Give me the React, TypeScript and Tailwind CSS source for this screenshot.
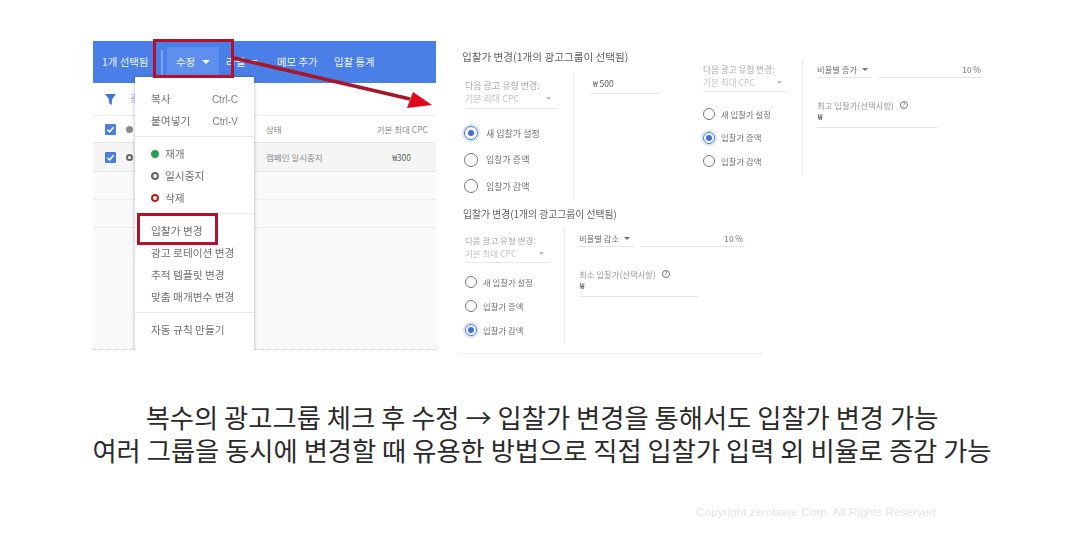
const KR = '"Noto Sans CJK KR","Noto Sans",sans-serif';

function Caret({ w, h, c }: { w: number; h: number; c: string }) {
  return (
    <svg width={w} height={h} viewBox="0 0 8 4" preserveAspectRatio="none" className="shrink-0" fill={c}>
      <path d="M0 0H8L4 4Z" />
    </svg>
  );
}

function Radio({ on, label, big }: { on?: boolean; label: string; big?: boolean }) {
  return (
    <div className={big ? "flex items-center gap-[8px] h-[14px]" : "flex items-center gap-[6px] h-[12px]"}>
      <span className={(big ? "w-[14px] h-[14px]" : "w-[12px] h-[12px]") + " rounded-full border-[1.5px] flex items-center justify-center shrink-0 " + (on ? "border-[#4a78d8] shadow-[0_0_0_2px_#dbe5f8]" : "border-[#777777]")}>
        {on && <span className="w-[6px] h-[6px] rounded-full bg-[#3f6fd6]" />}
      </span>
      <span className={(big ? "text-[9px]" : "text-[8.4px]") + " text-[#707070] leading-none"}>{label}</span>
    </div>
  );
}

function TypeSelect({ w, size, pb }: { w: string; size: string; pb: string }) {
  return (
    <div className={w + " " + pb + " border-b border-[#e6e6e6]"}>
      <div className={size + " leading-[13px] text-[#a8a8a8] whitespace-nowrap"}>다음 광고 유형 변경:</div>
      <div className={size + " flex justify-between items-center pr-[6px] leading-[13px] text-[#c4c4c4]"}>
        <span>기본 최대 CPC</span>
        <Caret w={5} h={3} c="#bdbdbd" />
      </div>
    </div>
  );
}

function PercentPanel({ label, floor, pt }: { label: string; floor: string; pt: string }) {
  return (
    <div className={"flex flex-col pl-[14px] " + pt}>
      <div className="flex gap-[6px]">
        <div className="w-[55px] h-[15px] border-b border-[#e6e6e6] flex items-start gap-[5px] text-[8.3px] leading-[12px] text-[#707070] whitespace-nowrap">
          <span>{label}</span>
          <span className="h-[12px] flex items-center"><Caret w={6} h={3} c="#707070" /></span>
        </div>
        <div className="w-[105px] h-[15px] border-b border-[#e6e6e6] text-right pr-[2px] text-[8.3px] leading-[12px] text-[#707070]">10 %</div>
      </div>
      <div className="w-[120px] mt-[21px] h-[29px] border-b border-[#e6e6e6]">
        <div className="flex items-center gap-[6px] text-[8.4px] leading-[12px] text-[#9a9a9a]">
          <span>{floor}</span>
          <span className="w-[8px] h-[8px] rounded-full border border-[#777777] text-[6px] leading-[6px] text-center text-[#666666]">?</span>
        </div>
        <div className="text-[8px] leading-[12px] text-[#444444] pl-[1px]">₩</div>
      </div>
    </div>
  );
}

function MenuItem({ children, right }: { children: React.ReactNode; right?: string }) {
  return (
    <div className="h-[22px] pl-[16px] pr-[16px] flex items-center justify-between text-[10.7px] text-[#707070] whitespace-nowrap">
      <span>{children}</span>
      {right && <span className="text-[10px] text-[#808080]" style={{ fontFamily: '"Liberation Sans",sans-serif' }}>{right}</span>}
    </div>
  );
}

function Dot({ c, ring }: { c: string; ring?: boolean }) {
  return <span className="w-[8px] h-[8px] rounded-full mr-[6px] inline-block align-[-0.5px] border-[2px]" style={{ borderColor: c, background: ring ? "#eeeeee" : c }} />;
}

function Check() {
  return (
    <span className="w-[11px] h-[11px] rounded-[1px] bg-[#4a7fe0] flex items-center justify-center shrink-0">
      <svg width="9" height="9" viewBox="0 0 10 10" fill="none" stroke="#ffffff" strokeWidth="1.6"><path d="M1.5 5.2 4 7.6 8.5 2.5" /></svg>
    </span>
  );
}

export default function App() {
  return (
    <div className="relative w-[1077px] h-[538px] bg-white overflow-hidden" style={{ fontFamily: KR }}>
      <div className="flex items-start pt-[41px] pl-[93px] blur-[0.6px]">
        {/* Left screenshot */}
        <div className="relative w-[343px] h-[309px] bg-[#fafafa] shrink-0 overflow-hidden">
          <div className="h-[42px] bg-[#4a7fe8] flex items-center text-[10.4px] text-white/90 pl-[9px] whitespace-nowrap">
            <span className="w-[52px]">1개 선택됨</span>
            <span className="w-[2px] h-[25px] bg-[#7ba1ee] ml-[7px]" />
            <div className="ml-[4px] w-[52px] h-[30px] bg-[#5f8fee] flex items-center justify-center gap-[7px]"><span>수정</span><Caret w={8} h={4} c="#ffffff" /></div>
            <div className="ml-[7px] w-[51px] flex items-center gap-[5px]"><span>라벨</span><Caret w={8} h={4} c="#ffffff" /></div>
            <span className="w-[57px]">메모 추가</span>
            <span>입찰 통계</span>
          </div>
          <div className="h-[33px] bg-white border-b border-[#eeeeee] flex items-center pl-[12px]">
            <svg width="11" height="11" viewBox="0 0 12 12" fill="#3f74e0"><path d="M0 0H12L7.5 6V12L4.5 10V6Z" /></svg>
            <span className="ml-[14px] text-[9px] text-[#8fb0ee]">광</span>
          </div>
          <div className="h-[27px] bg-white border-b border-[#e6e6e6] flex items-center pl-[12px] text-[8.5px] text-[#8a8a8a] whitespace-nowrap">
            <Check />
            <span className="ml-[10px] w-[7px] h-[7px] rounded-full bg-[#8a8a8a]" />
            <span className="ml-[133px]">상태</span>
            <span className="ml-auto mr-[8px]">기본 최대 CPC</span>
          </div>
          <div className="h-[29px] bg-[#f5f5f5] border-b border-[#e4e4e4] flex items-center pl-[12px] text-[8.5px] text-[#8a8a8a] whitespace-nowrap">
            <Check />
            <span className="ml-[10px] w-[7px] h-[7px] rounded-full border-[2px] border-[#666666]" />
            <span className="ml-[133px]">캠페인 일시중지</span>
            <span className="ml-auto mr-[25px] text-[#666666]">₩300</span>
          </div>
          <div className="h-[28px] border-b border-[#ececec]" />
          <div className="h-[28px] border-b border-[#ececec]" />
          <div className="absolute left-0 right-0 bottom-0 h-[1px] border-b border-dotted border-[#c4c4c4]" />
          {/* Dropdown menu */}
          <div className="absolute left-[42px] top-[36px] w-[119px] h-[280px] bg-white shadow-[0_0_4px_rgba(0,0,0,0.28)] pt-[11px]">
            <MenuItem right="Ctrl-C">복사</MenuItem>
            <MenuItem right="Ctrl-V">붙여넣기</MenuItem>
            <div className="h-[5px] mb-[6px] border-b border-[#e8e8e8]" />
            <MenuItem><Dot c="#2f9e55" />재개</MenuItem>
            <MenuItem><Dot c="#666666" ring />일시중지</MenuItem>
            <MenuItem><Dot c="#a8281f" ring />삭제</MenuItem>
            <div className="h-[5px] mb-[6px] border-b border-[#e8e8e8]" />
            <MenuItem>입찰가 변경</MenuItem>
            <MenuItem>광고 로테이션 변경</MenuItem>
            <MenuItem>추적 템플릿 변경</MenuItem>
            <MenuItem>맞춤 매개변수 변경</MenuItem>
            <div className="h-[5px] mb-[6px] border-b border-[#e8e8e8]" />
            <MenuItem>자동 규칙 만들기</MenuItem>
          </div>
        </div>

        {/* Right screenshots */}
        <div className="flex items-start ml-[26px] text-[#666666]">
          <div className="w-[306px] -ml-[5px] pl-[5px] pb-[10px] border-b border-[#eeeeee] shrink-0">
            <div className="text-[10.6px] leading-[14px] text-[#606060] pt-[9px] box-content whitespace-nowrap">입찰가 변경(1개의 광고그룹이 선택됨)</div>
            <div className="flex h-[125px] mt-[9px] ml-[3px]">
              <div className="w-[109px] border-r border-[#eaeaea] h-[125px] pt-[6px]">
                <TypeSelect w="w-[92px]" size="text-[9px]" pb="pb-[3px]" />
                <div className="flex flex-col gap-[12.5px] mt-[17px] -ml-[1px]">
                  <Radio big on label="새 입찰가 설정" />
                  <Radio big label="입찰가 증액" />
                  <Radio big label="입찰가 감액" />
                </div>
              </div>
              <div className="pl-[16px] pt-[4px]">
                <div className="w-[70px] h-[17px] border-b border-[#e6e6e6] text-[8.5px] leading-[12px] text-[#606060] pl-[3px]">₩ 500</div>
              </div>
            </div>
            <div className="text-[9.8px] leading-[13px] text-[#606060] mt-[10px] ml-[1px] whitespace-nowrap">입찰가 변경(1개의 광고그룹이 선택됨)</div>
            <div className="flex h-[115px] mt-[7px] ml-[3px]">
              <div className="w-[100px] border-r border-[#eaeaea] pt-[6px] h-[115px]">
                <TypeSelect w="w-[85px]" size="text-[8.5px]" pb="pb-[2px]" />
                <div className="flex flex-col gap-[12px] mt-[13px]">
                  <Radio label="새 입찰가 설정" />
                  <Radio label="입찰가 증액" />
                  <Radio on label="입찰가 감액" />
                </div>
              </div>
              <PercentPanel label="비율별 감소" floor="최소 입찰가(선택사항)" pt="pt-[4px]" />
            </div>
          </div>
          <div className="-ml-[60px] mt-[19px] flex h-[114px]">
            <div className="w-[100px] border-r border-[#eaeaea] h-[114px] pt-[3px]">
              <TypeSelect w="w-[85px]" size="text-[8.6px]" pb="pb-[2px]" />
              <div className="flex flex-col gap-[11.5px] mt-[16px]">
                <Radio label="새 입찰가 설정" />
                <Radio on label="입찰가 증액" />
                <Radio label="입찰가 감액" />
              </div>
            </div>
            <PercentPanel label="비율별 증가" floor="최고 입찰가(선택사항)" pt="pt-[3px]" />
          </div>
        </div>
      </div>

      {/* Caption */}
      <div className="mt-[46px] pl-[7px] text-center text-[26.3px] leading-[33px] text-[#2a2a2a] whitespace-nowrap">
        <p>복수의 광고그룹 체크 후 수정 → 입찰가 변경을 통해서도 입찰가 변경 가능</p>
        <p>여러 그룹을 동시에 변경할 때 유용한 방법으로 직접 입찰가 입력 외 비율로 증감 가능</p>
      </div>
      <p className="absolute left-[696px] top-[504px] text-[11.75px] leading-[16px] text-[#e4e4e4]" style={{ fontFamily: '"Liberation Sans",sans-serif' }}>Copyright zerobase Corp. All Rights Reserved</p>

      {/* Red annotations */}
      <div className="absolute left-[153px] top-[39px] w-[81px] h-[39px] border-[3.5px] border-[#b3122a]" />
      <div className="absolute left-[137px] top-[213px] w-[81px] h-[32px] border-[3px] border-[#b3122a]" />
      <svg className="absolute left-0 top-0 pointer-events-none" width="1077" height="538">
        <path d="M234 58 410 99" stroke="#a8162a" strokeWidth="3.5" fill="none" />
        <path d="M432 105 407 108 413 92Z" fill="#e0061c" />
      </svg>
    </div>
  );
}
